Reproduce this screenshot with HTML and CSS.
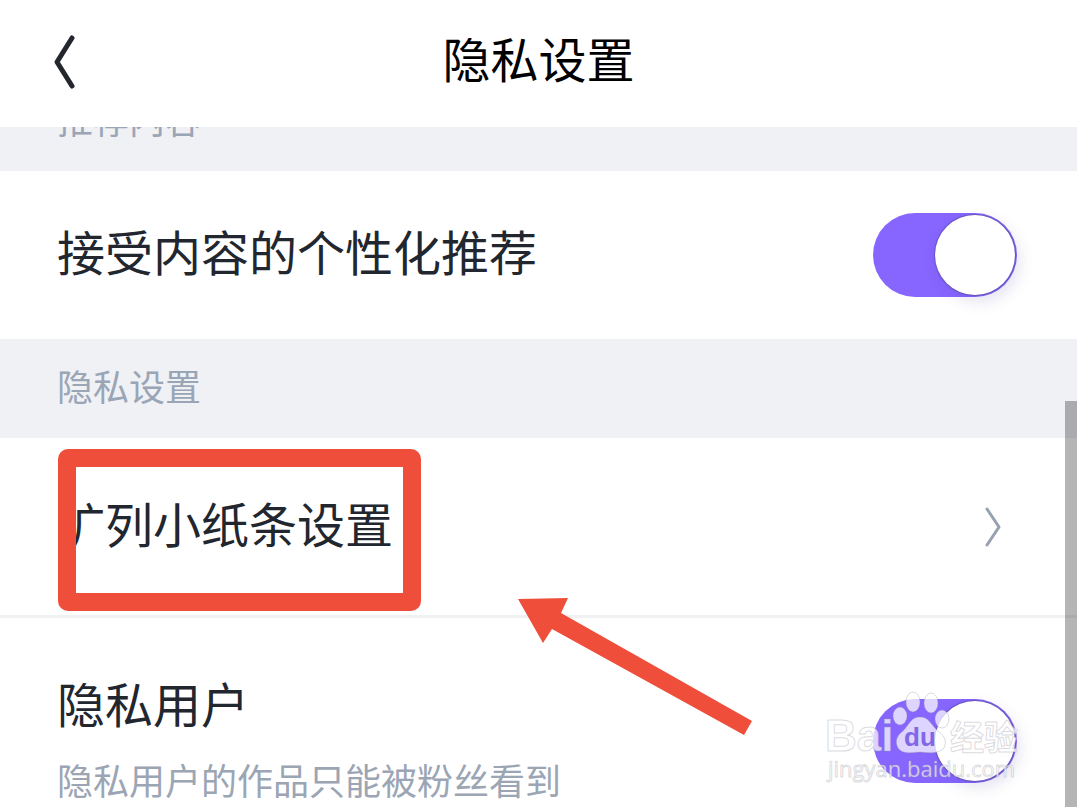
FILE: index.html
```html
<!DOCTYPE html>
<html lang="zh-CN">
<head>
    <meta charset="UTF-8">
    <meta name="viewport" content="width=device-width, initial-scale=1.0">
    <title>隐私设置</title>
    <link rel="stylesheet" href="styles.css">
</head>
<body>
    <div class="app">
        <header class="top-bar">
            <button class="back" type="button" aria-label="返回">
                <svg width="24" height="56" viewBox="0 0 24 56">
                    <path d="M20 4L5 28L20 52" fill="none" stroke="#23262d" stroke-width="5" stroke-linecap="round" stroke-linejoin="round"/>
                </svg>
            </button>
            <h1>隐私设置</h1>
        </header>

        <main class="settings">
            <h2 class="section-title">推荐内容</h2>
            <div class="row">
                <label class="row-label" for="recommend">接受内容的个性化推荐</label>
                <input class="switch" type="checkbox" id="recommend" checked>
            </div>

            <h2 class="section-title">隐私设置</h2>
            <a class="row row-link" href="#note">
                <span class="row-label">扩列小纸条设置</span>
                <svg class="chevron" width="20" height="44" viewBox="0 0 20 44">
                    <path d="M4 4L16 22L4 40" fill="none" stroke="#98a1b0" stroke-width="3" stroke-linecap="round" stroke-linejoin="round"/>
                </svg>
                <span class="highlight"></span>
                <svg class="arrow" width="240" height="144" viewBox="0 0 240 144">
                    <path d="M2 2L52 1L45 16L236 124L228 138L36 32L27 46Z" fill="#ee4e3a"/>
                </svg>
            </a>

            <div class="row row-tall">
                <div class="row-text">
                    <label class="row-label" for="private">隐私用户</label>
                    <p class="row-desc">隐私用户的作品只能被粉丝看到</p>
                </div>
                <input class="switch" type="checkbox" id="private" checked>
                <svg class="watermark" width="208" height="100" viewBox="0 0 208 100">
                    <g class="mark">
                        <text class="mark-latin" x="6" y="61">Bai</text>
                        <ellipse cx="81" cy="26" rx="7" ry="9"/>
                        <ellipse cx="94" cy="12" rx="7" ry="10"/>
                        <ellipse cx="112" cy="13" rx="7" ry="10"/>
                        <ellipse cx="123" cy="29" rx="7" ry="9"/>
                        <path d="M101 27C92 27 90 35 84 41C77 46 76 52 79 58C83 64 92 63 101 62C110 63 120 64 125 58C128 52 126 46 119 41C112 35 110 27 101 27Z"/>
                        <text class="mark-han" x="131" y="60">经验</text>
                        <text class="mark-url" x="9" y="87">jingyan.baidu.com</text>
                    </g>
                    <text class="mark-du" x="85" y="56">du</text>
                </svg>
            </div>
        </main>

        <div class="scroll-thumb"></div>
    </div>
</body>
</html>
```
FILE: styles.css
```css
* {
    box-sizing: border-box;
}
body {
    margin: 0;
    background-color: #fff;
    color: #22262e;
    font-family: "Noto Sans CJK SC", sans-serif;
}
h1, h2, p {
    margin: 0;
    font-weight: normal;
}
.app {
    position: relative;
    height: 100vh;
    overflow: hidden;
}
.top-bar {
    position: relative;
    z-index: 2;
    display: grid;
    grid-template-columns: 1fr auto 1fr;
    align-items: center;
    height: 127px;
    padding: 0 52px 4px;
    background-color: #fff;
}
.top-bar h1 {
    padding-bottom: 10px;
    color: #000;
    font-size: 48px;
    line-height: 72px;
}
.back {
    justify-self: start;
    padding: 0;
    border: 0;
    background: none;
    cursor: pointer;
}
.back svg {
    display: block;
}

/* list is scrolled a little under the top bar */
.settings {
    margin-top: -55px;
}
.section-title {
    padding: 19px 57px 25px;
    background-color: #eff1f5;
    color: #9aa5b5;
    font-size: 36px;
    line-height: 55px;
}
.row {
    position: relative;
    display: flex;
    align-items: center;
    justify-content: space-between;
    min-height: 168px;
    padding: 0 60px 0 57px;
}
.row-link {
    min-height: 180px;
    padding-right: 74px;
    border-bottom: 3px solid #eff1f3;
    color: inherit;
    text-decoration: none;
}
.row-tall {
    min-height: 246px;
}
.row-text {
    display: flex;
    flex-direction: column;
    gap: 4px;
    padding-bottom: 10px;
}
.row-label {
    padding-bottom: 10px;
    font-size: 48px;
    line-height: 72px;
}
.row-desc {
    color: #9ba5b4;
    font-size: 36px;
    line-height: 55px;
}
.switch {
    appearance: none;
    flex: none;
    width: 144px;
    height: 84px;
    margin: 0;
    padding: 2px;
    border-radius: 42px;
    background-color: #8766ff;
    cursor: pointer;
}
.switch::before {
    content: "";
    display: block;
    width: 80px;
    height: 80px;
    border-radius: 50%;
    background-color: #fff;
    box-shadow: 0 0 1px 1px rgba(60, 60, 90, 0.4), 4px 6px 16px rgba(60, 40, 140, 0.15);
}
.switch:checked::before {
    margin-left: auto;
}

.highlight {
    position: absolute;
    top: 11px;
    left: 58px;
    width: 363px;
    height: 162px;
    border: 18px solid #ee4e3a;
    border-radius: 10px;
}
.arrow {
    position: absolute;
    z-index: 1;
    top: 159px;
    left: 516px;
}

.watermark {
    position: absolute;
    top: 72px;
    right: 50px;
    pointer-events: none;
}
.mark {
    fill: rgba(255, 255, 255, 0.72);
    stroke: rgba(150, 150, 160, 0.35);
    stroke-width: 1px;
}
.mark-latin, .mark-du {
    font-family: "Liberation Sans", sans-serif;
    font-weight: bold;
}
.mark-latin {
    font-size: 44px;
}
.mark-du {
    fill: #8067e8;
    font-size: 26px;
}
.mark-han {
    font-size: 34px;
    font-weight: bold;
}
.mark-url {
    font-family: "Open Sans", sans-serif;
    font-size: 22px;
}
.scroll-thumb {
    position: absolute;
    z-index: 3;
    top: 401px;
    right: 0;
    bottom: 0;
    width: 12px;
    background-color: rgba(0, 0, 0, 0.29);
}
```
